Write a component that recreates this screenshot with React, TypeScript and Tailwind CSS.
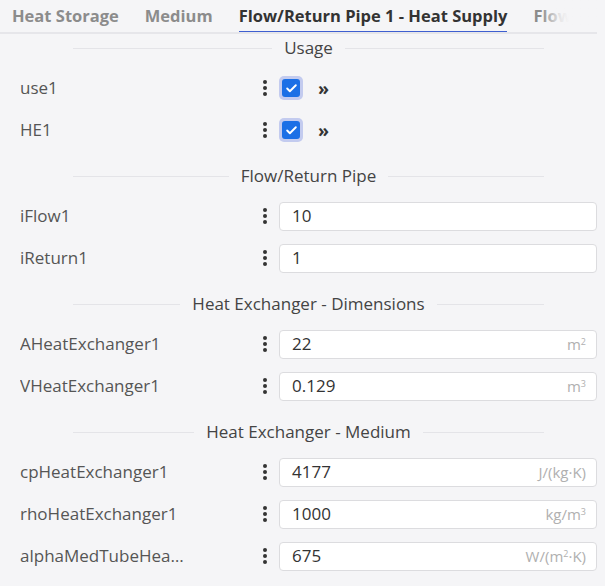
import { Check } from "lucide-react";

type Row = {
  label: string;
  kind: "check" | "input";
  value?: string;
  unit?: React.ReactNode;
};

type Section = { title: string; rows: Row[] };

const sections: Section[] = [
  {
    title: "Usage",
    rows: [
      { label: "use1", kind: "check" },
      { label: "HE1", kind: "check" },
    ],
  },
  {
    title: "Flow/Return Pipe",
    rows: [
      { label: "iFlow1", kind: "input", value: "10" },
      { label: "iReturn1", kind: "input", value: "1" },
    ],
  },
  {
    title: "Heat Exchanger - Dimensions",
    rows: [
      {
        label: "AHeatExchanger1",
        kind: "input",
        value: "22",
        unit: (
          <>
            m<sup className="text-[9px]">2</sup>
          </>
        ),
      },
      {
        label: "VHeatExchanger1",
        kind: "input",
        value: "0.129",
        unit: (
          <>
            m<sup className="text-[9px]">3</sup>
          </>
        ),
      },
    ],
  },
  {
    title: "Heat Exchanger - Medium",
    rows: [
      { label: "cpHeatExchanger1", kind: "input", value: "4177", unit: "J/(kg·K)" },
      {
        label: "rhoHeatExchanger1",
        kind: "input",
        value: "1000",
        unit: (
          <>
            kg/m<sup className="text-[9px]">3</sup>
          </>
        ),
      },
      {
        label: "alphaMedTubeHeatExchanger1",
        kind: "input",
        value: "675",
        unit: (
          <>
            W/(m<sup className="text-[9px]">2</sup>·K)
          </>
        ),
      },
    ],
  },
];

const tabs = ["Heat Storage", "Medium", "Flow/Return Pipe 1 - Heat Supply", "Flow/Return Pipe 2"];

function Dots() {
  return (
    <div className="flex w-[18px] flex-col items-center gap-[2px]">
      <span className="h-[4px] w-[4px] rounded-full bg-[#333]" />
      <span className="h-[4px] w-[4px] rounded-full bg-[#333]" />
      <span className="h-[4px] w-[4px] rounded-full bg-[#333]" />
    </div>
  );
}

function SectionHeader({ title }: { title: string }) {
  return (
    <div className="ml-[73px] flex h-[26px] w-[471px] items-center gap-3">
      <div className="h-px flex-1 bg-[#e4e4e8]" />
      <span className="text-[17px] text-[#444]">{title}</span>
      <div className="h-px flex-1 bg-[#e4e4e8]" />
    </div>
  );
}

function FieldRow({ row }: { row: Row }) {
  return (
    <div className="flex h-[42px] items-center pl-[20px] pr-[8px]">
      <div className="w-[236px]">
        <span className="block max-w-[166px] truncate text-[17px] text-[#555]">{row.label}</span>
      </div>
      <Dots />
      <div className="ml-[5px] flex flex-1 items-center">
        {row.kind === "check" ? (
          <>
            <div className="flex h-[24px] w-[24px] items-center justify-center rounded-[5px] bg-[#c3cbef]">
              <div className="flex h-[18px] w-[18px] items-center justify-center rounded-[3px] bg-[#1b6fe6]">
                <Check size={13} strokeWidth={3.5} className="text-white" />
              </div>
            </div>
            <span className="ml-[15px] text-[18px] font-bold leading-none text-[#333]">»</span>
          </>
        ) : (
          <div className="flex h-[29px] flex-1 items-center justify-between rounded-[4px] border border-[#dcdcdf] bg-white pl-[12px] pr-[10px]">
            <span className="text-[17px] text-[#333]">{row.value}</span>
            <span className="text-[15px] text-[#b0b0b0]">{row.unit}</span>
          </div>
        )}
      </div>
    </div>
  );
}

export default function App() {
  return (
    <div className="min-h-[586px] w-[605px] bg-[#f5f5f7] font-['Open_Sans',sans-serif]">
      <div className="relative mr-[8px] flex h-[34px] gap-[26px] overflow-hidden whitespace-nowrap border-b-2 border-[#e6e6ea] pl-[12px]">
        {tabs.map((t, i) => (
          <div key={t} className="relative flex shrink-0 items-center">
            <span
              className={
                i === 2
                  ? "text-[16.5px] font-bold text-[#333]"
                  : "text-[16.5px] font-bold text-[#8c8c8c]"
              }
            >
              {t}
            </span>
            {i === 2 && <div className="absolute -bottom-[2px] left-0 right-0 h-[3px] bg-[#3e5fd0]" />}
          </div>
        ))}
        <div className="pointer-events-none absolute bottom-[2px] right-0 top-0 w-[62px] bg-gradient-to-r from-[#f5f5f7]/0 from-10% via-[#f5f5f7]/85 via-40% to-[#f5f5f7] to-55%" />
      </div>
      <div className="pt-[1px]">
        {sections.map((s, i) => (
          <div key={s.title} className={i === 0 ? "" : "mt-[12px]"}>
            <SectionHeader title={s.title} />
            <div className="mt-[6px]">
              {s.rows.map((r) => (
                <FieldRow key={r.label} row={r} />
              ))}
            </div>
          </div>
        ))}
      </div>
    </div>
  );
}
